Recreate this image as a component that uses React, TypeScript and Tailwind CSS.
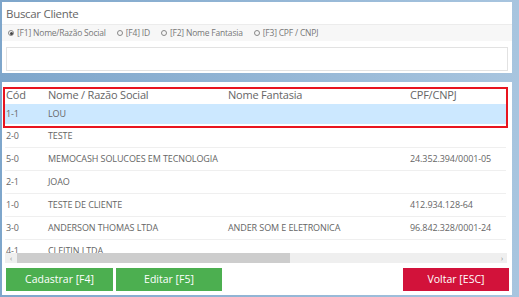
import React from "react";

const rows = [
  { cod: "1-1", nome: "LOU", fantasia: "", doc: "" },
  { cod: "2-0", nome: "TESTE", fantasia: "", doc: "" },
  { cod: "5-0", nome: "MEMOCASH SOLUCOES EM TECNOLOGIA", fantasia: "", doc: "24.352.394/0001-05" },
  { cod: "2-1", nome: "JOAO", fantasia: "", doc: "" },
  { cod: "1-0", nome: "TESTE DE CLIENTE", fantasia: "", doc: "412.934.128-64" },
  { cod: "3-0", nome: "ANDERSON THOMAS LTDA", fantasia: "ANDER SOM E ELETRONICA", doc: "96.842.328/0001-24" },
  { cod: "4-1", nome: "CLEITIN LTDA", fantasia: "", doc: "" },
];

const options = ["[F1] Nome/Razão Social", "[F4] ID", "[F2] Nome Fantasia", "[F3] CPF / CNPJ"];

export default function App() {
  return (
    <div
      className="w-[519px] h-[297px] overflow-hidden bg-gradient-to-r from-[#7ea6cb] to-[#a8c5df] pl-[2px] pr-[7px] pt-[2px] pb-[2px] flex flex-col gap-[9px] text-[#555]"
      style={{ fontFamily: '"Open Sans", "Noto Sans", sans-serif' }}
    >
      {/* Busca */}
      <div className="bg-white h-[71px] flex flex-col">
        <div className="h-[23px] flex items-end px-[4px] pb-[2px] text-[11.5px] text-[#666] tracking-[-0.3px] border-b border-[#ececec]">
          Buscar Cliente
        </div>
        <div className="h-[16px] bg-[#f7f7f7] flex items-center gap-[11px] px-[6px] text-[8.5px] text-[#777] tracking-[-0.2px]">
          {options.map((o, i) => (
            <label key={o} className="flex items-center gap-[3px]">
              <span className="w-[6px] h-[6px] rounded-full border border-[#888] flex items-center justify-center">
                {i === 0 && <span className="w-[3px] h-[3px] rounded-full bg-[#444]" />}
              </span>
              {o}
            </label>
          ))}
        </div>
        <div className="px-[4px] pt-[6px]">
          <div className="h-[24px] border border-[#e2e2e2] bg-white" />
        </div>
      </div>

      {/* Lista */}
      <div className="bg-white flex-1 flex flex-col pl-[1px] pt-[5px]">
        <div className="relative w-[505px]">
          <div className="h-[17px] flex items-center text-[11px] text-[#666] tracking-[-0.2px]">
            <span className="w-[45px] pl-[3px]">Cód</span>
            <span className="w-[180px]">Nome / Razão Social</span>
            <span className="w-[182px]">Nome Fantasia</span>
            <span>CPF/CNPJ</span>
          </div>
          <div className="h-[149px] overflow-hidden">
            {rows.map((r, i) => (
              <div
                key={r.cod + r.nome}
                className={`flex items-center text-[9px] text-[#666] tracking-[-0.1px] border-b ${
                  i === 0 ? "h-[21px] bg-[#cce8ff] border-white" : "h-[23px] border-[#efefef] mx-[2px]"
                }`}
              >
                <span className={i === 0 ? "w-[45px] pl-[3px]" : "w-[43px] pl-[1px]"}>{r.cod}</span>
                <span className="w-[180px]">{r.nome}</span>
                <span className="w-[182px]">{r.fantasia}</span>
                <span>{r.doc}</span>
              </div>
            ))}
          </div>
          <div className="absolute left-0 top-0 w-[505px] h-[41px] border-2 border-[#e8141f] pointer-events-none" />
        </div>

        {/* scrollbar */}
        <div className="h-[10px] w-[502px] ml-[2px] bg-[#efefef] flex items-center text-[7px] leading-none text-[#888]">
          <span className="w-[12px] text-center">‹</span>
          <span className="h-[10px] w-[273px] bg-[#cdcdcd]" />
          <span className="flex-1" />
          <span className="w-[10px] text-center">›</span>
        </div>

        <div className="flex items-center gap-[3px] mt-[5px] pl-[3px]">
          <button className="w-[107px] h-[23px] bg-[#4caf50] text-white text-[10.5px]">Cadastrar [F4]</button>
          <button className="w-[106px] h-[23px] bg-[#4caf50] text-white text-[10.5px]">Editar [F5]</button>
          <span className="flex-1" />
          <button className="w-[106px] h-[23px] bg-[#d2123a] text-white text-[10.5px] mr-[3px]">Voltar [ESC]</button>
        </div>
      </div>
    </div>
  );
}
